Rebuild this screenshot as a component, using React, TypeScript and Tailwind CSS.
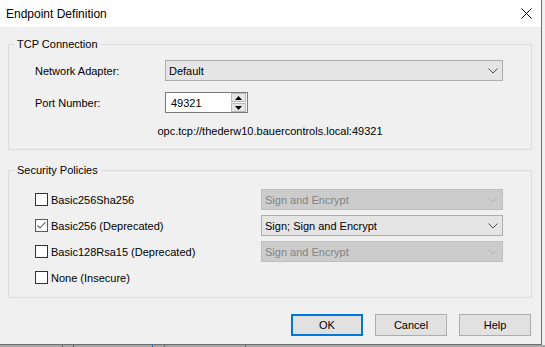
import React from "react";

function Chevron({ disabled = false }: { disabled?: boolean }) {
  return (
    <svg width="10" height="6" viewBox="0 0 10 6" className="shrink-0">
      <path d="M0.5 0.5 L5 5 L9.5 0.5" fill="none" stroke={disabled ? "#b4b4b4" : "#4a4a4a"} strokeWidth="1" />
    </svg>
  );
}

function Combo({ value, disabled = false, className }: { value: string; disabled?: boolean; className: string }) {
  return (
    <div
      className={`flex h-[21px] items-center justify-between border pl-[3px] pr-[4px] ${
        disabled ? "border-[#bfbfbf] bg-[#cccccc] text-[#838383]" : "border-[#adadad] bg-[#e5e5e5] text-black"
      } ${className}`}
    >
      <span>{value}</span>
      <Chevron disabled={disabled} />
    </div>
  );
}

function CheckBox({ checked = false }: { checked?: boolean }) {
  return (
    <span
      className={`flex h-[13px] w-[13px] shrink-0 items-center justify-center border bg-white ${
        checked ? "border-[#5a5a5a]" : "border-[#333333]"
      }`}
    >
      {checked && (
        <svg width="11" height="11" viewBox="0 0 11 11">
          <path d="M1.5 5.5 L4 8 L9.5 2" fill="none" stroke="#5a5a5a" strokeWidth="1.1" />
        </svg>
      )}
    </span>
  );
}

function SpinButton({ up }: { up: boolean }) {
  return (
    <div className="flex h-[9px] w-[15px] items-center justify-center border border-[#b9b9b9] bg-[#e6e6e6]">
      <svg width="7" height="4" viewBox="0 0 7 4">
        <path d={up ? "M0 4 L3.5 0 L7 4 Z" : "M0 0 L3.5 4 L7 0 Z"} fill="#000" />
      </svg>
    </div>
  );
}

function Button({ label, primary = false }: { label: string; primary?: boolean }) {
  return (
    <div
      className={`flex h-[22px] w-[72px] items-center justify-center bg-[#e1e1e1] ${
        primary ? "border-2 border-[#0078d7]" : "border border-[#adadad]"
      }`}
    >
      {label}
    </div>
  );
}

const policies = [
  { name: "Basic256Sha256", mode: "Sign and Encrypt", checked: false, disabled: true },
  { name: "Basic256 (Deprecated)", mode: "Sign; Sign and Encrypt", checked: true, disabled: false },
  { name: "Basic128Rsa15 (Deprecated)", mode: "Sign and Encrypt", checked: false, disabled: true },
  { name: "None (Insecure)", mode: "", checked: false, disabled: true },
];

export default function App() {
  return (
    <div className="flex h-[347px] w-[545px] flex-col overflow-hidden bg-[#f0f0f0] font-['Liberation_Sans',Arial,sans-serif] text-[11px] leading-[14px] text-black">
      <div className="flex h-[345px] w-[542px] flex-col border-r border-b border-[#6e6e6e]">
        {/* title bar */}
        <div className="flex h-[27px] shrink-0 items-center justify-between bg-white pl-[6px] pr-[9px]">
          <span className="text-[12px]">Endpoint Definition</span>
          <svg width="11" height="11" viewBox="0 0 11 11">
            <path d="M0.5 0.5 L10.5 10.5 M10.5 0.5 L0.5 10.5" stroke="#000" strokeWidth="1" />
          </svg>
        </div>

        <div className="flex flex-1 flex-col">
          <fieldset className="mx-[8px] mt-[10px] h-[113px] w-[524px] border border-[#dcdcdc]">
            <legend className="ml-[5px] px-[3px] leading-[14px]">TCP Connection</legend>
            <div className="flex flex-col pl-[26px] pt-[9px]">
              <div className="flex h-[21px] items-center">
                <span className="w-[130px]">Network Adapter:</span>
                <Combo value="Default" className="w-[338px]" />
              </div>
              <div className="mt-[11px] flex h-[21px] items-center">
                <span className="w-[130px]">Port Number:</span>
                <div className="flex h-[21px] w-[83px] items-center justify-between border border-[#7a7a7a] bg-white pl-[5px] pr-px">
                  <span>49321</span>
                  <div className="flex flex-col gap-px">
                    <SpinButton up />
                    <SpinButton up={false} />
                  </div>
                </div>
              </div>
            </div>
            <div className="mt-[11px] text-center">opc.tcp://thederw10.bauercontrols.local:49321</div>
          </fieldset>

          <fieldset className="mx-[8px] mt-[13px] h-[135px] w-[524px] border border-[#dcdcdc]">
            <legend className="ml-[5px] px-[3px] leading-[14px]">Security Policies</legend>
            <div className="flex flex-col gap-[5px] pl-[26px] pt-[12px]">
              {policies.map((p) => (
                <div key={p.name} className="flex h-[21px] items-center">
                  <div className="flex w-[226px] items-center gap-[3px]">
                    <CheckBox checked={p.checked} />
                    <span>{p.name}</span>
                  </div>
                  {p.mode && <Combo value={p.mode} disabled={p.disabled} className="w-[242px]" />}
                </div>
              ))}
            </div>
          </fieldset>

          <div className="mt-[16px] flex justify-end gap-[12px] pr-[10px]">
            <Button label="OK" primary />
            <Button label="Cancel" />
            <Button label="Help" />
          </div>
        </div>
      </div>
      <div className="relative h-[2px] w-full bg-[#a8a8a8]">
        <span className="absolute left-[62px] top-0 h-[2px] w-px bg-[#6e6e6e]" />
        <span className="absolute left-[73px] top-0 h-[2px] w-px bg-[#0078d7]" />
        <span className="absolute left-[152px] top-0 h-[2px] w-px bg-[#0078d7]" />
        <span className="absolute left-[164px] top-0 h-[2px] w-px bg-[#6e6e6e]" />
        <span className="absolute left-[245px] top-0 h-[2px] w-px bg-[#6e6e6e]" />
      </div>
    </div>
  );
}
